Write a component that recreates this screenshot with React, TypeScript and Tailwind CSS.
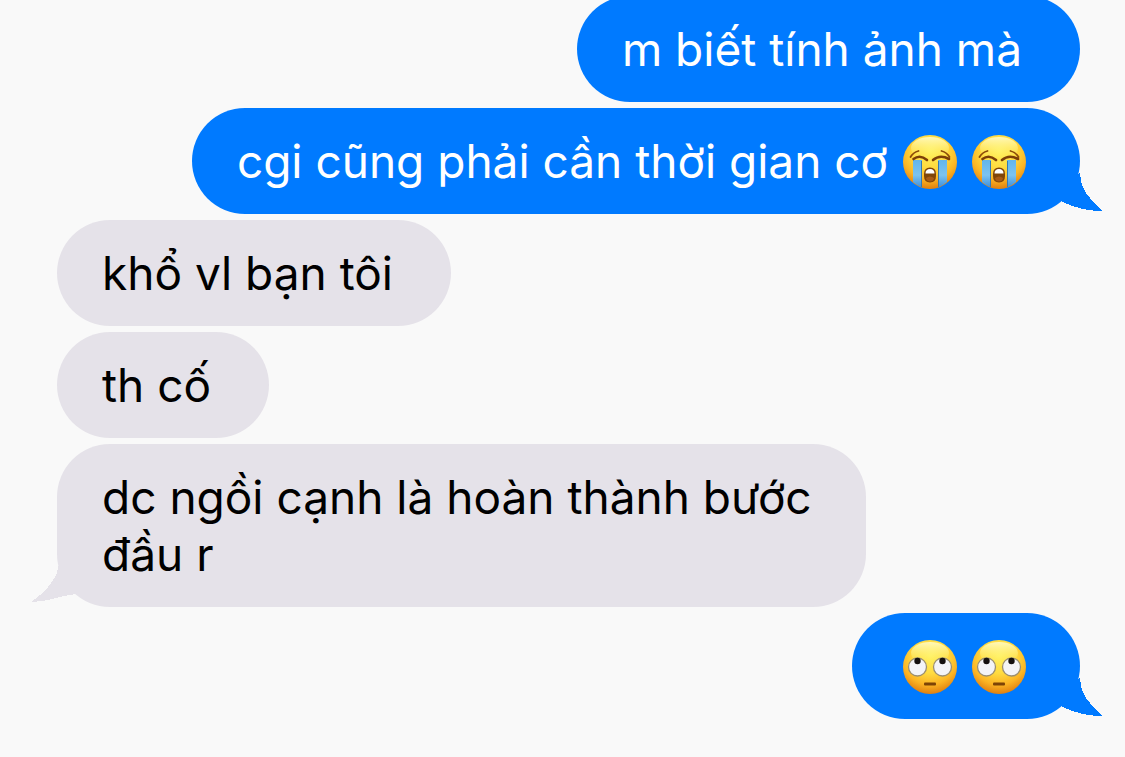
import clsx from 'clsx';
import type { ReactNode } from 'react';

interface BubbleProps {
    sent?: boolean;
    tail?: boolean;
    children: ReactNode;
}

function Face({ id, label, children }: { id: string; label: string; children: ReactNode }) {
    return (
        <svg viewBox="0 0 54 54" role="img" aria-label={label} className="size-[54px] shrink-0">
            <defs>
                <radialGradient id={id} cx="0.5" cy="0.3" r="0.7">
                    <stop offset="0" stopColor="#fff05a" />
                    <stop offset="0.45" stopColor="#ffdb40" />
                    <stop offset="0.75" stopColor="#fbb424" />
                    <stop offset="1" stopColor="#e07f10" />
                </radialGradient>
                <linearGradient id={`${id}-shine`} x1="0" y1="0" x2="0" y2="1">
                    <stop offset="0" stopColor="#fffbc8" stopOpacity="0.9" />
                    <stop offset="1" stopColor="#fff46b" stopOpacity="0" />
                </linearGradient>
            </defs>
            <circle cx="27" cy="27" r="27" fill={`url(#${id})`} />
            <ellipse cx="27" cy="13" rx="19" ry="11" fill={`url(#${id}-shine)`} />
            {children}
        </svg>
    );
}

function CryingFace({ id }: { id: string }) {
    return (
        <Face id={id} label="😭">
            <defs>
                <linearGradient id={`${id}-tear`} x1="0" y1="0" x2="0" y2="1">
                    <stop offset="0" stopColor="#62b5ec" />
                    <stop offset="0.55" stopColor="#7cc3f1" />
                    <stop offset="1" stopColor="#3c8fdc" />
                </linearGradient>
            </defs>
            <path d="M10 25H19V52.5Q14 50.5 10 47Z" fill={`url(#${id}-tear)`} />
            <path d="M35 25H44V47Q40 50.5 35 52.5Z" fill={`url(#${id}-tear)`} />
            <path d="M18.5 26V52M35.5 26V52" stroke="#3579b5" strokeWidth="1" />
            <path
                d="M7.5 22Q10 17.5 15.5 16M38.5 16Q44 17.5 46.5 22"
                fill="none"
                stroke="#8c4b09"
                strokeWidth="1.8"
                strokeLinecap="round"
            />
            <path
                d="M10.5 24Q17 19 24 25M30 25Q37 19 46 24"
                fill="none"
                stroke="#7c3f08"
                strokeWidth="2.6"
                strokeLinecap="round"
            />
            <path
                d="M21 39Q21 32.5 27 32.5T33 39V41Q33 47.5 27 47.5T21 41Z"
                fill="#804509"
            />
            <path d="M22.5 38.5Q22.5 34 27 34T31.5 38.5Z" fill="#fff" />
            <path d="M23 43Q27 40 31 43Q30.5 46.5 27 46.5T23 43Z" fill="#a85a16" />
        </Face>
    );
}

function RollingEyesFace({ id }: { id: string }) {
    return (
        <Face id={id} label="🙄">
            <circle cx="14.5" cy="27" r="9" fill="#f4f4f7" stroke="#9b8f72" strokeWidth="1.3" />
            <circle cx="39.5" cy="27" r="9" fill="#f4f4f7" stroke="#9b8f72" strokeWidth="1.3" />
            <circle cx="14.5" cy="21" r="3.2" fill="#15100f" />
            <circle cx="39.5" cy="21" r="3.2" fill="#15100f" />
            <rect x="21" y="42.5" width="12" height="3" rx="1" fill="#7c4306" />
        </Face>
    );
}

function Tail({ sent }: { sent: boolean }) {
    return (
        <svg
            viewBox="0 0 54 44"
            shapeRendering="crispEdges"
            aria-hidden="true"
            className={clsx(
                'absolute bottom-0 h-11 w-[54px] fill-current',
                sent ? '-right-6 text-[#007aff]' : '-left-[27px] text-[#e5e2e9]',
            )}
        >
            {sent ? (
                <path d="M30 3C30 18 38 28 53 41C38 41 24 38 11 31L0 20Z" />
            ) : (
                <path d="M28 3C29 11 18 28 1 39C18 39 32 32 46 31L54 20Z" />
            )}
        </svg>
    );
}

function Bubble({ sent = false, tail = false, children }: BubbleProps) {
    return (
        <li
            className={clsx(
                'relative rounded-[53px] pt-[25px] pr-[54px] pb-6 pl-[45px]',
                sent
                    ? 'self-end bg-[#007aff] text-white'
                    : 'max-w-[809px] self-start bg-[#e5e2e9] text-black',
            )}
        >
            {tail && <Tail sent={sent} />}
            <div className="relative flex min-h-[57px] items-center gap-[15px]">{children}</div>
        </li>
    );
}

export default function App() {
    return (
        <main className="min-h-screen overflow-hidden bg-[#f9f9f9] pr-[45px] pb-9 pl-[57px] font-['Inter','Noto_Sans',sans-serif] text-[46px] leading-[57px]">
            <ol className="-mt-1 flex flex-col gap-1.5">
                <Bubble sent>
                    <p className="pr-1">m biết tính ảnh mà</p>
                </Bubble>
                <Bubble sent tail>
                    <p>cgi cũng phải cần thời gian cơ</p>
                    <CryingFace id="cry-1" />
                    <CryingFace id="cry-2" />
                </Bubble>
                <Bubble>
                    <p className="pr-1">khổ vl bạn tôi</p>
                </Bubble>
                <Bubble>
                    <p className="pr-1">th cố</p>
                </Bubble>
                <Bubble tail>
                    <p>dc ngồi cạnh là hoàn thành bước đầu r</p>
                </Bubble>
                <Bubble sent tail>
                    <div className="flex gap-[15px] pl-1.5">
                        <RollingEyesFace id="roll-1" />
                        <RollingEyesFace id="roll-2" />
                    </div>
                </Bubble>
            </ol>
        </main>
    );
}
